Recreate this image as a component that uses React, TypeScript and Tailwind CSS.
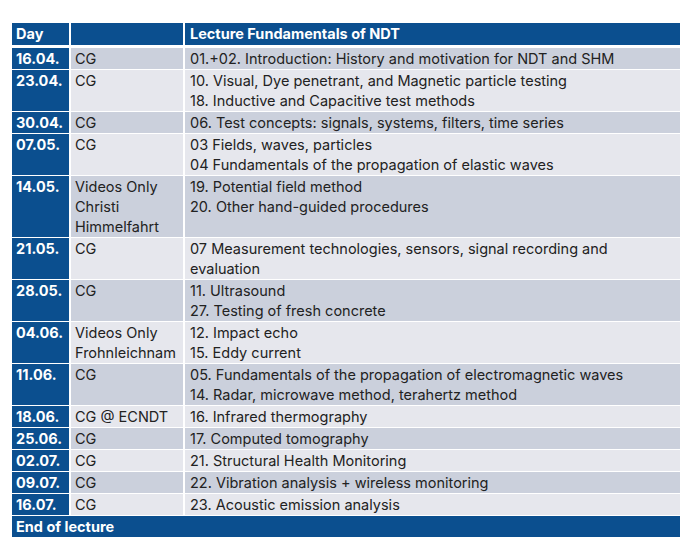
import React from "react";

type Row = { day: string; who: string[]; lectures: string[]; dark: boolean };

const rows: Row[] = [
  { day: "16.04.", who: ["CG"], lectures: ["01.+02. Introduction: History and motivation for NDT and SHM"], dark: true },
  { day: "23.04.", who: ["CG"], lectures: ["10. Visual, Dye penetrant, and Magnetic particle testing", "18. Inductive and Capacitive test methods"], dark: false },
  { day: "30.04.", who: ["CG"], lectures: ["06. Test concepts: signals, systems, filters, time series"], dark: true },
  { day: "07.05.", who: ["CG"], lectures: ["03 Fields, waves, particles", "04 Fundamentals of the propagation of elastic waves"], dark: false },
  { day: "14.05.", who: ["Videos Only", "Christi", "Himmelfahrt"], lectures: ["19. Potential field method", "20. Other hand-guided procedures"], dark: true },
  { day: "21.05.", who: ["CG"], lectures: ["07 Measurement technologies, sensors, signal recording and", "evaluation"], dark: false },
  { day: "28.05.", who: ["CG"], lectures: ["11. Ultrasound", "27. Testing of fresh concrete"], dark: true },
  { day: "04.06.", who: ["Videos Only", "Frohnleichnam"], lectures: ["12. Impact echo", "15. Eddy current"], dark: false },
  { day: "11.06.", who: ["CG"], lectures: ["05. Fundamentals of the propagation of electromagnetic waves", "14. Radar, microwave method, terahertz method"], dark: true },
  { day: "18.06.", who: ["CG @ ECNDT"], lectures: ["16. Infrared thermography"], dark: false },
  { day: "25.06.", who: ["CG"], lectures: ["17. Computed tomography"], dark: true },
  { day: "02.07.", who: ["CG"], lectures: ["21. Structural Health Monitoring"], dark: false },
  { day: "09.07.", who: ["CG"], lectures: ["22. Vibration analysis + wireless monitoring"], dark: true },
  { day: "16.07.", who: ["CG"], lectures: ["23. Acoustic emission analysis"], dark: false },
];

export default function App() {
  return (
    <div
      className="w-[699px] h-[549px] bg-white pt-[23px] pl-[12px]"
      style={{ fontFamily: "Inter, 'Liberation Sans', sans-serif" }}
    >
      <div className="w-[668px] flex flex-col text-[14.5px] leading-[20px]">
        <div className="grid grid-cols-[57px_112px_1fr] gap-x-[2px] h-[22px] mb-[3px] text-white font-bold">
          <div className="bg-[#0b4f8f] px-[4px] py-[1px]">Day</div>
          <div className="bg-[#0b4f8f]" />
          <div className="bg-[#0b4f8f] px-[5px] py-[1px]">Lecture Fundamentals of NDT</div>
        </div>
        <div className="flex flex-col gap-y-[1px]">
          {rows.map((r) => {
            const bg = r.dark ? "bg-[#cbd0dc]" : "bg-[#e6e7ed]";
            return (
              <div key={r.day} className="grid grid-cols-[57px_112px_1fr] gap-x-[2px]">
                <div className="bg-[#0b4f8f] text-white font-bold px-[4px] py-[0.5px]">{r.day}</div>
                <div className={`${bg} text-[#222222] px-[4px] py-[0.5px] whitespace-nowrap`}>
                  {r.who.map((w) => (
                    <div key={w}>{w}</div>
                  ))}
                </div>
                <div className={`${bg} text-[#222222] px-[5px] py-[0.5px] whitespace-nowrap`}>
                  {r.lectures.map((l) => (
                    <div key={l}>{l}</div>
                  ))}
                </div>
              </div>
            );
          })}
          <div className="bg-[#0b4f8f] text-white font-bold px-[4px] h-[21px] leading-[21px]">End of lecture</div>
        </div>
      </div>
    </div>
  );
}
